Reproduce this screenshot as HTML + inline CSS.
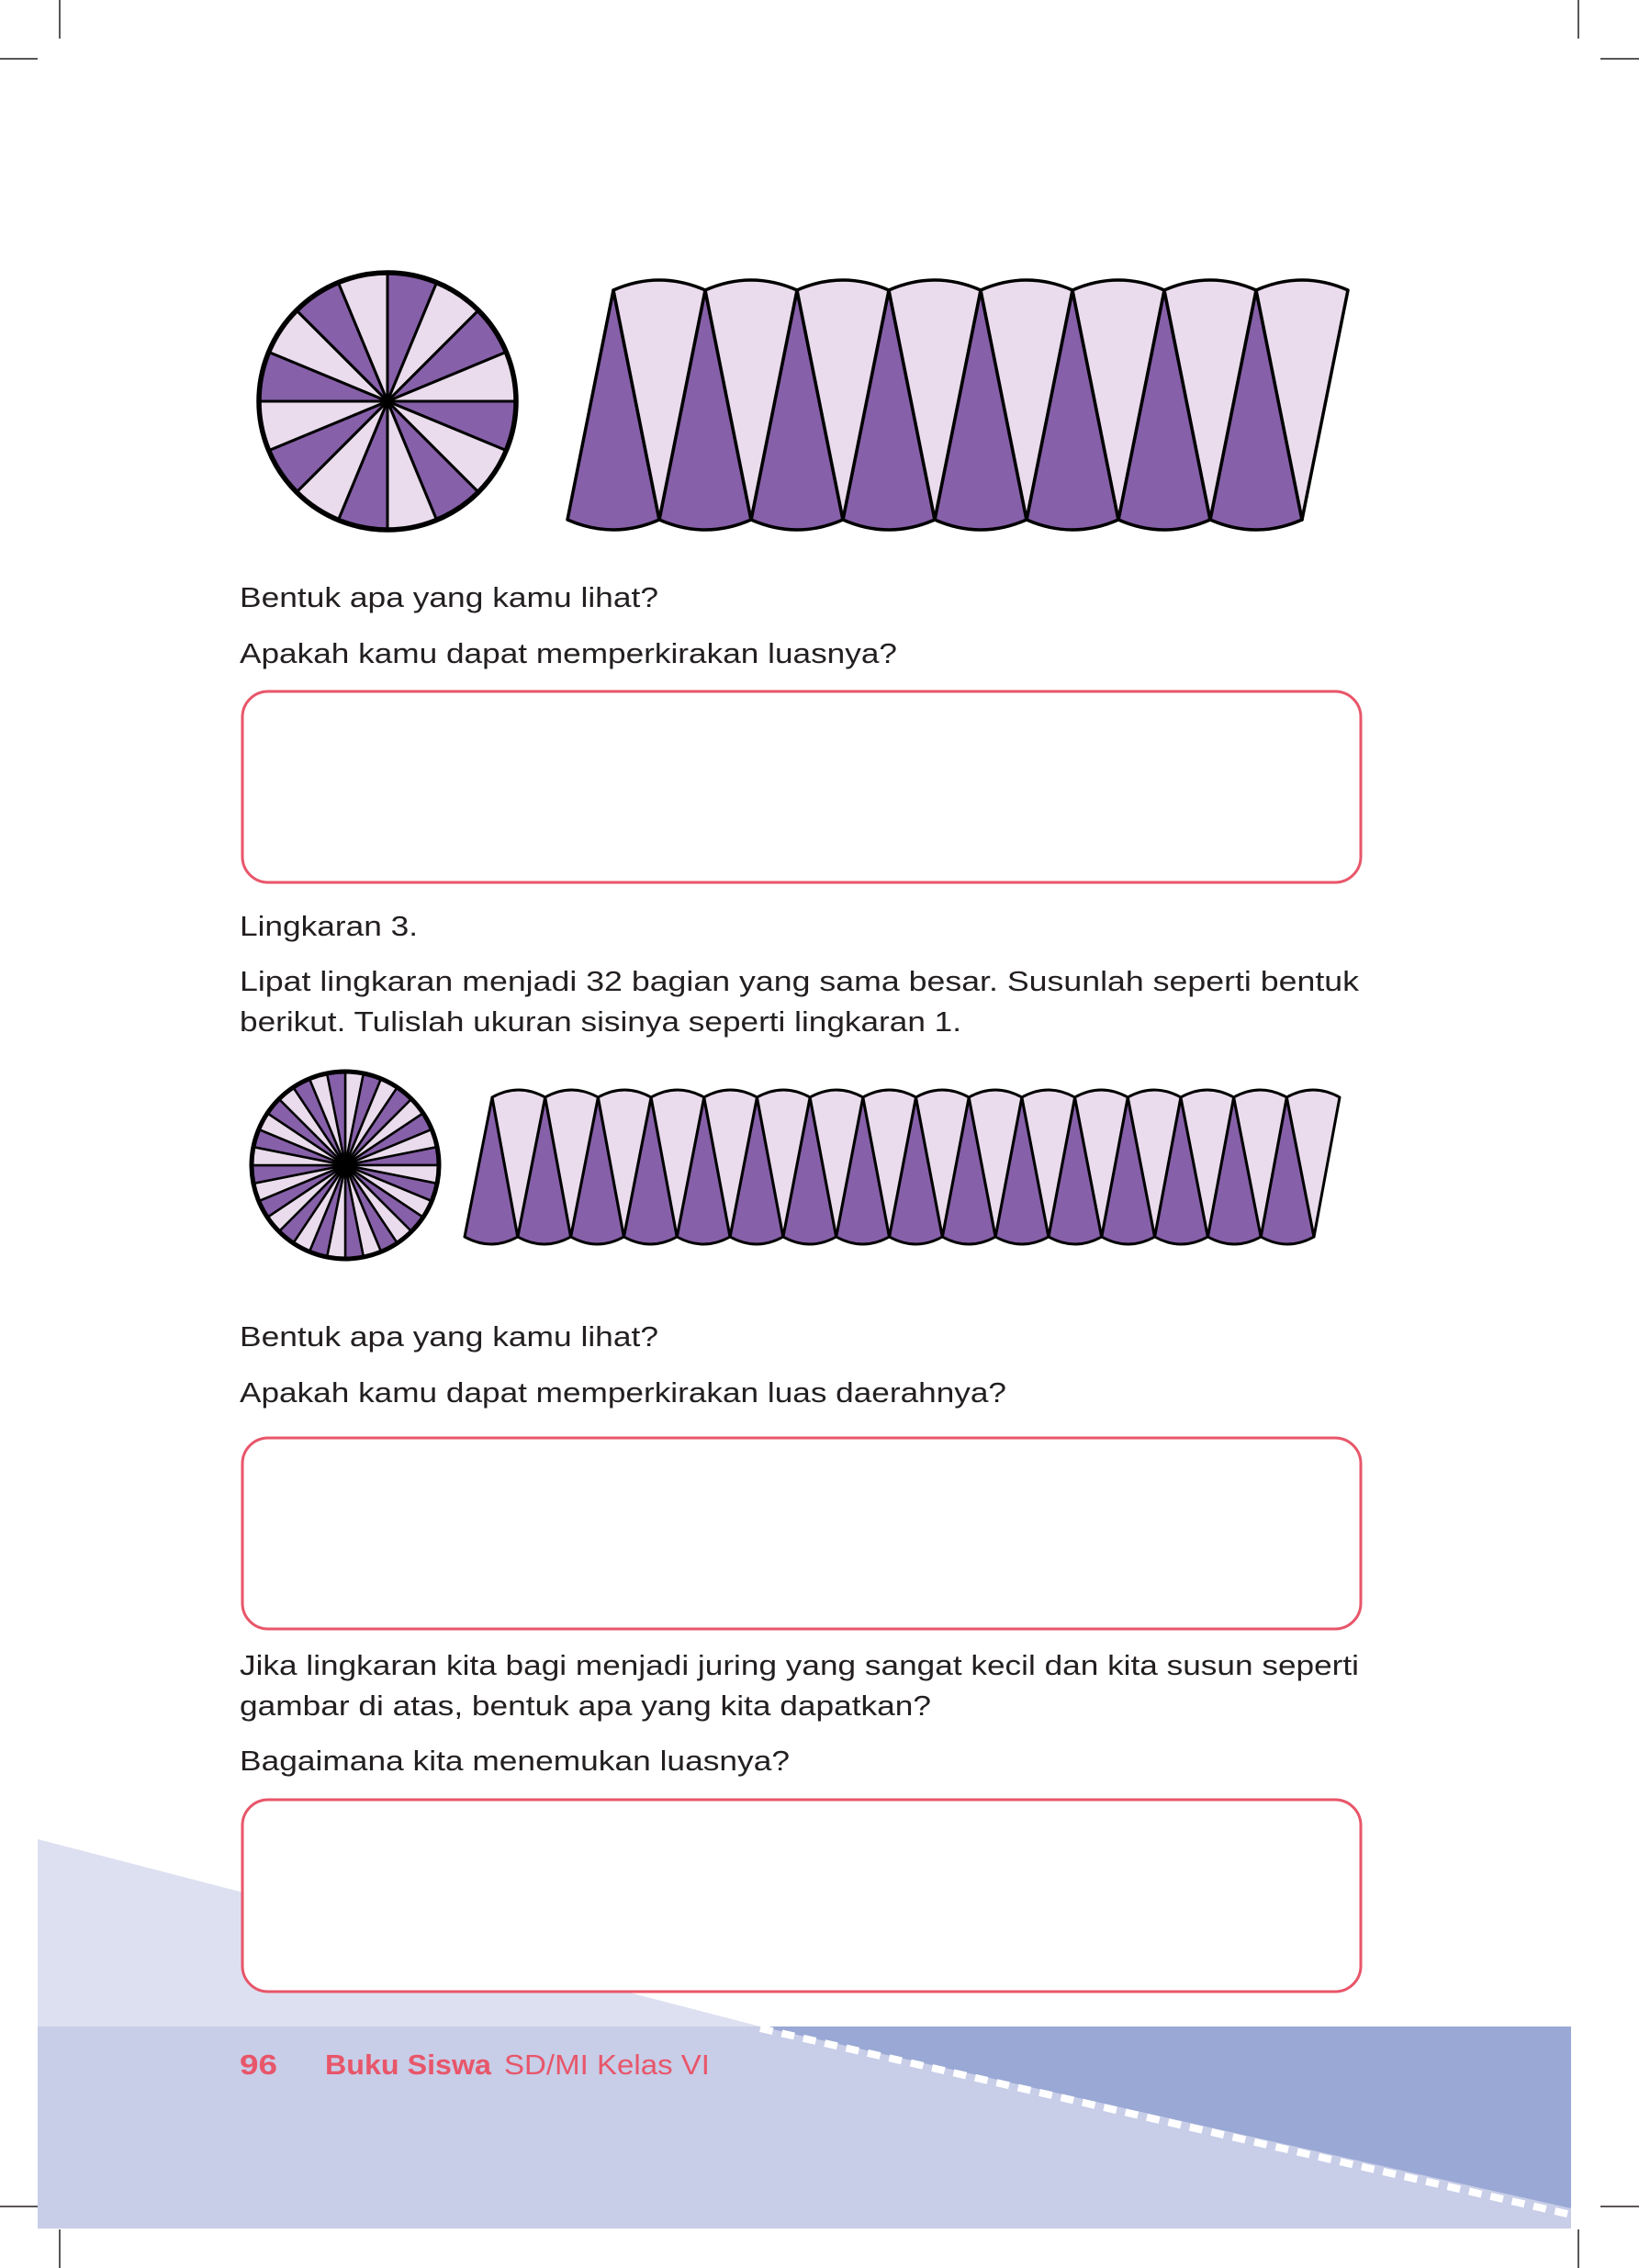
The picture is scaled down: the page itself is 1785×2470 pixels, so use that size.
<!DOCTYPE html>
<html><head><meta charset="utf-8">
<style>
html,body{margin:0;padding:0;background:#fff;}
svg{display:block;}
text{font-family:"Liberation Sans",sans-serif;}
</style></head>
<body>
<svg id="s" width="1785" height="2470" viewBox="0 0 1785 2470" xmlns="http://www.w3.org/2000/svg">
<rect width="1785" height="2470" fill="#fff"/>
<polygon points="41,2003 828,2207 41,2207" fill="#dde0f1"/>
<rect x="41" y="2207" width="1670" height="220" fill="#c8cde8"/>
<polygon points="828,2207 1711,2207 1711,2405" fill="#99a8d4"/>
<line x1="828" y1="2209" x2="1711" y2="2412" stroke="#fff" stroke-width="8" stroke-dasharray="14,10"/>
<g stroke="#231f20" stroke-width="1.5">
<line x1="65" y1="0" x2="65" y2="42"/><line x1="1719" y1="0" x2="1719" y2="42"/>
<line x1="0" y1="64" x2="41" y2="64"/><line x1="1743" y1="64" x2="1785" y2="64"/>
<line x1="0" y1="2403" x2="41" y2="2403"/><line x1="1743" y1="2403" x2="1785" y2="2403"/>
<line x1="65" y1="2428" x2="65" y2="2470"/><line x1="1719" y1="2428" x2="1719" y2="2470"/>
</g>
<g id="figs"></g>
<g fill="#fff" stroke="#e8566a" stroke-width="3">
<rect x="264" y="753" width="1218" height="208" rx="28"/>
<rect x="264" y="1566" width="1218" height="208" rx="28"/>
<rect x="264" y="1960" width="1218" height="209" rx="28"/>
</g>
<g font-size="31" fill="#231f20">
<text x="261" y="661" textLength="456" lengthAdjust="spacingAndGlyphs">Bentuk apa yang kamu lihat?</text>
<text x="261" y="722" textLength="716" lengthAdjust="spacingAndGlyphs">Apakah kamu dapat memperkirakan luasnya?</text>
<text x="261" y="1019" textLength="194" lengthAdjust="spacingAndGlyphs">Lingkaran 3.</text>
<text x="261" y="1079" textLength="1219" lengthAdjust="spacingAndGlyphs">Lipat lingkaran menjadi 32 bagian yang sama besar. Susunlah seperti bentuk</text>
<text x="261" y="1123" textLength="786" lengthAdjust="spacingAndGlyphs">berikut. Tulislah ukuran sisinya seperti lingkaran 1.</text>
<text x="261" y="1466" textLength="456" lengthAdjust="spacingAndGlyphs">Bentuk apa yang kamu lihat?</text>
<text x="261" y="1527" textLength="835" lengthAdjust="spacingAndGlyphs">Apakah kamu dapat memperkirakan luas daerahnya?</text>
<text x="261" y="1824" textLength="1219" lengthAdjust="spacingAndGlyphs">Jika lingkaran kita bagi menjadi juring yang sangat kecil dan kita susun seperti</text>
<text x="261" y="1868" textLength="753" lengthAdjust="spacingAndGlyphs">gambar di atas, bentuk apa yang kita dapatkan?</text>
<text x="261" y="1928" textLength="599" lengthAdjust="spacingAndGlyphs">Bagaimana kita menemukan luasnya?</text>
</g>
<g font-size="31" fill="#e8566a">
<text x="261" y="2259" font-weight="bold" textLength="41" lengthAdjust="spacingAndGlyphs">96</text>
<text x="354" y="2259" font-weight="bold" textLength="181" lengthAdjust="spacingAndGlyphs">Buku Siswa</text>
<text x="549" y="2259" textLength="224" lengthAdjust="spacingAndGlyphs">SD/MI Kelas VI</text>
</g>
</svg>
<script>
(function(){
var NS="http://www.w3.org/2000/svg",g=document.getElementById("figs");
var D="#8660a8",L="#eadcec";
function el(t,a){var e=document.createElementNS(NS,t);for(var k in a)e.setAttribute(k,a[k]);g.appendChild(e);return e;}
function circle(cx,cy,r,n,darkOdd,sw){
 var step=2*Math.PI/n;
 for(var k=0;k<n;k++){
  var a0=k*step,a1=(k+1)*step;
  var x0=cx+r*Math.sin(a0),y0=cy-r*Math.cos(a0),x1=cx+r*Math.sin(a1),y1=cy-r*Math.cos(a1);
  var dark=darkOdd?(k%2==1):(k%2==0);
  el("path",{d:"M"+cx+","+cy+"L"+x0+","+y0+"A"+r+","+r+" 0 0 1 "+x1+","+y1+"Z",fill:dark?D:L,stroke:"#000","stroke-width":sw,"stroke-linejoin":"round"});
 }
 el("circle",{cx:cx,cy:cy,r:r,fill:"none",stroke:"#000","stroke-width":sw+2.5});
}
function strip(n,tx0,tx1,ty,bx0,bx1,by,bul,sw){
 var tw=(tx1-tx0)/n,bw=(bx1-bx0)/n;
 for(var i=0;i<n;i++){
  var ax=bx0+i*bw,bx=bx0+(i+1)*bw,tx=tx0+i*tw;
  el("path",{d:"M"+ax+","+by+"L"+tx+","+ty+"L"+bx+","+by+"Q"+((ax+bx)/2)+","+(by+2*bul)+" "+ax+","+by+"Z",fill:D,stroke:"#000","stroke-width":sw,"stroke-linejoin":"round"});
 }
 for(var i=0;i<n;i++){
  var a=tx0+i*tw,b=tx0+(i+1)*tw,p=bx0+(i+1)*bw;
  el("path",{d:"M"+a+","+ty+"Q"+((a+b)/2)+","+(ty-2*bul)+" "+b+","+ty+"L"+p+","+by+"Z",fill:L,stroke:"#000","stroke-width":sw,"stroke-linejoin":"round"});
 }
}
circle(422,437,140,16,false,3);
strip(8,668,1468,316,618,1418,566,11,3.5);
circle(376,1269,102,32,true,2.5);
strip(16,536,1459,1195,506,1431,1347,8,3);
})();
</script>
</body></html>
